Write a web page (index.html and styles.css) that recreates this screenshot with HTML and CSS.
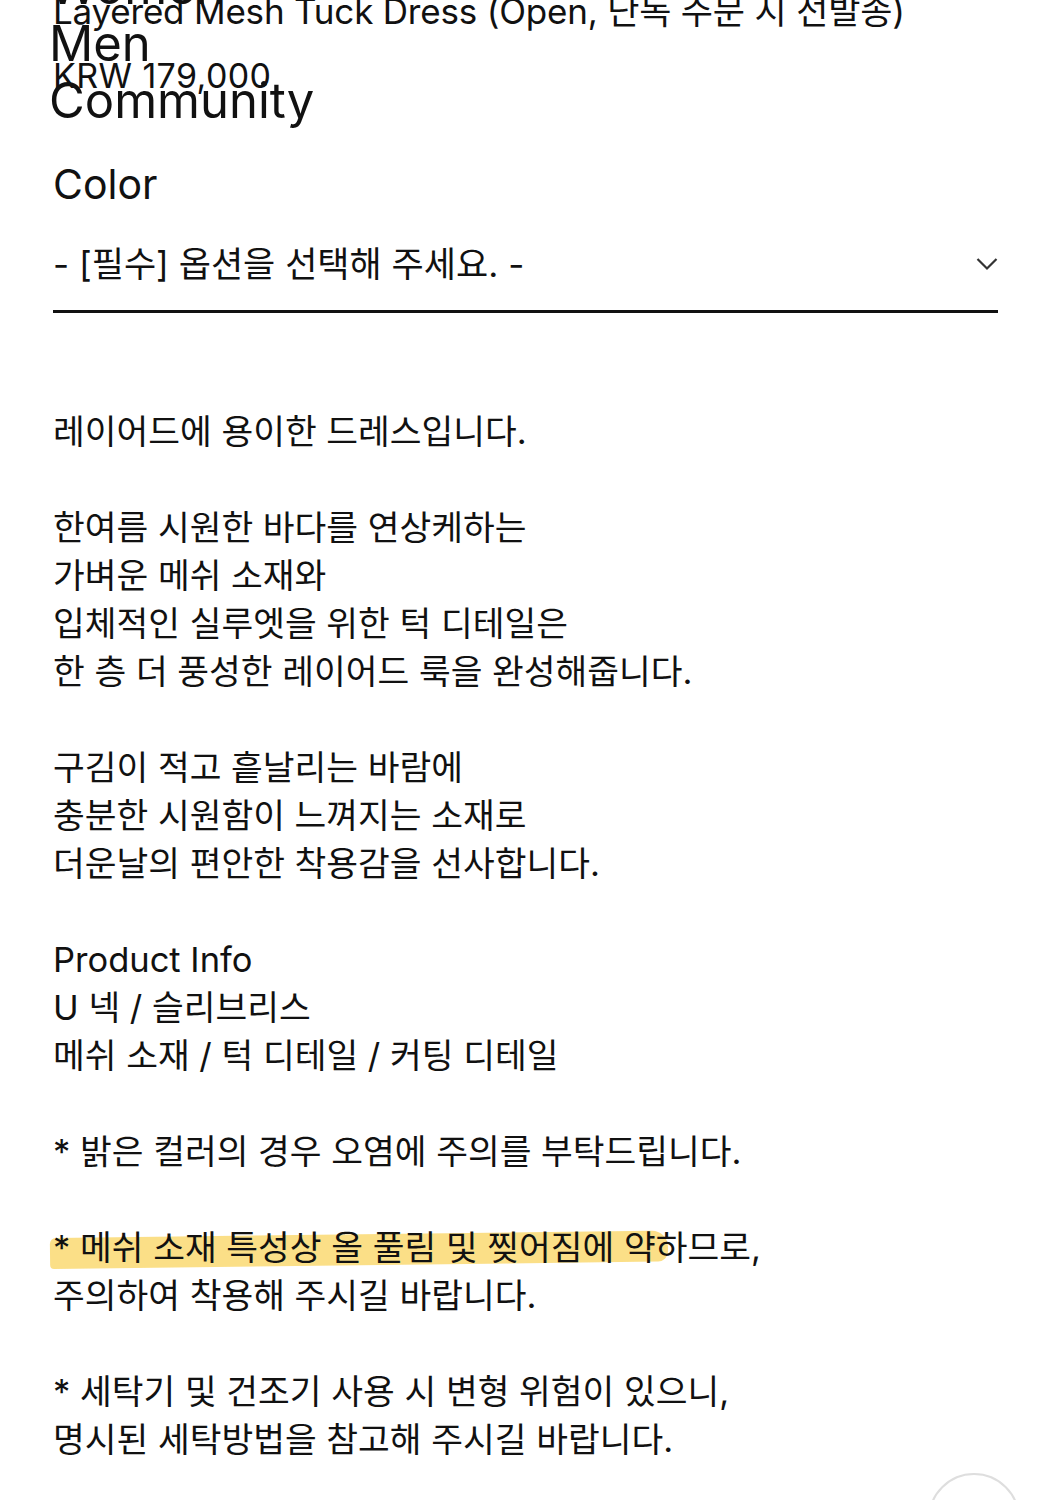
FILE: index.html
```html
<!DOCTYPE html>
<html lang="ko">
<head>
<meta charset="utf-8">
<title>Layered Mesh Tuck Dress</title>
<link rel="stylesheet" href="styles.css">
</head>
<body>
<div class="page">
  <header class="top">
    <nav class="nav">
      <a class="nav-item" href="#">Women</a>
      <a class="nav-item" href="#">Men</a>
      <a class="nav-item" href="#">Community</a>
    </nav>
    <div class="product-head">
      <h1 class="product-name">Layered Mesh Tuck Dress (Open, 단독 주문 시 선발송)</h1>
      <div class="product-price">KRW 179,000</div>
    </div>
  </header>

  <section class="option">
    <div class="option-label">Color</div>
    <div class="select">
      <span class="select-text">- [필수] 옵션을 선택해 주세요. -</span>
      <svg class="chevron" width="22" height="14" viewBox="0 0 22 14"><path d="M1.5 2 L11 11.5 L20.5 2" fill="none" stroke="#333" stroke-width="2.2"/></svg>
    </div>
  </section>

  <section class="desc">
    <p>레이어드에 용이한 드레스입니다.</p>
    <p>한여름 시원한 바다를 연상케하는<br>가벼운 메쉬 소재와<br>입체적인 실루엣을 위한 턱 디테일은<br>한 층 더 풍성한 레이어드 룩을 완성해줍니다.</p>
    <p>구김이 적고 흩날리는 바람에<br>충분한 시원함이 느껴지는 소재로<br>더운날의 편안한 착용감을 선사합니다.</p>
    <p>Product Info<br>U 넥 / 슬리브리스<br>메쉬 소재 / 턱 디테일 / 커팅 디테일</p>
    <p>* 밝은 컬러의 경우 오염에 주의를 부탁드립니다.</p>
    <p><span class="marked">* 메쉬 소재 특성상 올 풀림 및 찢어짐에 약하므로,</span><br>주의하여 착용해 주시길 바랍니다.</p>
    <p>* 세탁기 및 건조기 사용 시 변형 위험이 있으니,<br>명시된 세탁방법을 참고해 주시길 바랍니다.</p>
  </section>
</div>
<a class="to-top" href="#" aria-label="top"></a>
</body>
</html>
```

FILE: styles.css
```css
* { box-sizing: border-box; }
html, body { margin: 0; padding: 0; background: #fff; }
body {
  font-family: "Inter", "Noto Sans CJK KR", sans-serif;
  color: #111;
  overflow: hidden;
}
.page {
  padding: 0 53px;
}
.top {
  position: relative;
  display: flow-root;
}
.nav {
  display: flex;
  flex-direction: column;
  margin-top: -42px;
  margin-left: -4px;
}
.nav-item {
  font-size: 49px;
  line-height: 57px;
  color: #111;
  text-decoration: none;
  letter-spacing: 0;
}
.product-head {
  position: absolute;
  left: 0;
  top: -9px;
}
.product-name {
  margin: 0;
  font-weight: 400;
  font-size: 35px;
  line-height: 40px;
  letter-spacing: -0.2px;
  white-space: nowrap;
}
.product-price {
  margin-top: 25px;
  font-size: 34px;
  line-height: 40px;
  letter-spacing: 0.4px;
}
.option {
  margin-top: 31px;
}
.option-label {
  font-size: 41px;
  line-height: 48px;
}
.select {
  margin-top: 32px;
  display: flex;
  align-items: center;
  justify-content: space-between;
  padding-bottom: 22px;
  border-bottom: 3px solid #111;
}
.select-text {
  font-size: 35px;
  line-height: 48px;
}
.chevron {
  display: block;
  margin-right: 0;
}
.desc {
  margin-top: 95px;
  font-size: 34.5px;
  line-height: 48px;
}
.desc p {
  margin: 0 0 48px;
}
.marked {
  position: relative;
  z-index: 0;
}
.marked::before {
  content: "";
  position: absolute;
  z-index: -1;
  left: -3px;
  top: 11px;
  width: 618px;
  height: 31px;
  background: #fbdc7a;
  border-radius: 6px 16px 10px 4px;
  transform: rotate(-0.7deg);
  transform-origin: left center;
  opacity: 0.9;
}
.to-top {
  position: fixed;
  left: 928px;
  top: 1473px;
  width: 92px;
  height: 92px;
  border: 2px solid #dedede;
  border-radius: 50%;
  background: #fff;
}
```
